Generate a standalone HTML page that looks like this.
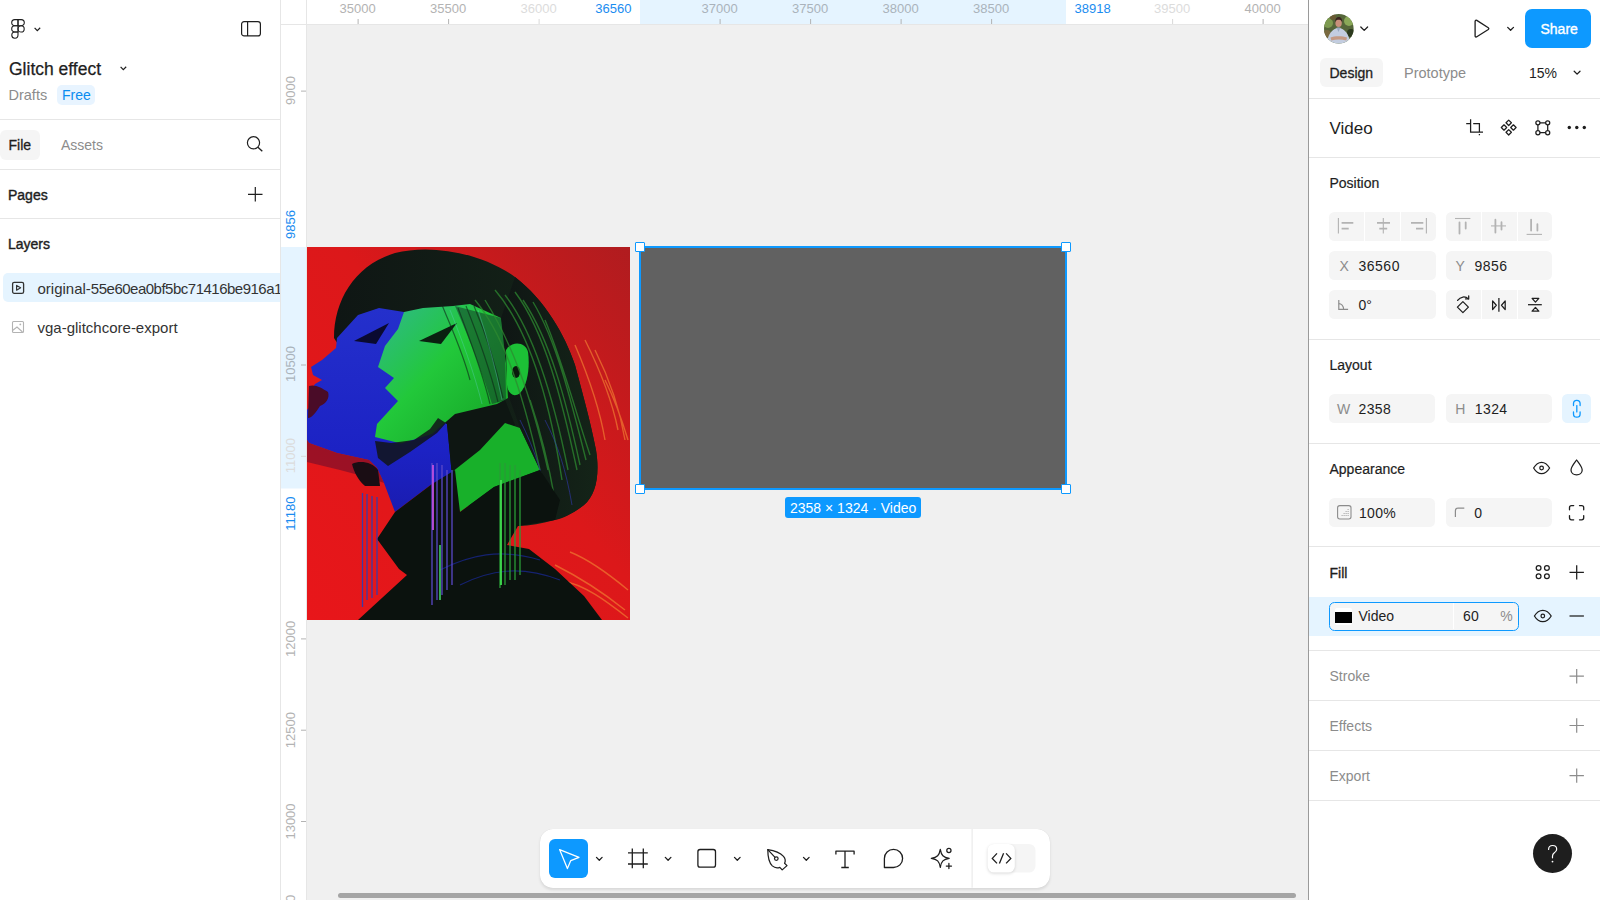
<!DOCTYPE html>
<html><head><meta charset="utf-8">
<style>
*{box-sizing:border-box;margin:0;padding:0}
html,body{width:1600px;height:900px;overflow:hidden;background:#fff;font-family:"Liberation Sans",sans-serif;color:#1e1e1e}
.a{position:absolute}
.t{position:absolute;white-space:nowrap;line-height:1}
svg{position:absolute;overflow:visible}
.sep{position:absolute;height:1px;background:#e6e6e6}
</style></head><body>

<!-- LEFT PANEL -->
<div class="a" id="left" style="left:0;top:0;width:280px;height:900px;background:#fff;overflow:hidden">
  <!-- figma logo -->
  <svg style="left:11px;top:19px" width="14" height="20" viewBox="0 0 14 20">
    <g fill="none" stroke="#1e1e1e" stroke-width="1.1">
      <path d="M7 0.6H3.8A3.1 3.1 0 0 0 3.8 6.8H7Z"/>
      <path d="M7 0.6H10.2A3.1 3.1 0 0 1 10.2 6.8H7Z"/>
      <path d="M7 6.8H3.8A3.1 3.1 0 0 0 3.8 13H7Z"/>
      <circle cx="10.1" cy="9.9" r="3.1"/>
      <path d="M7 13H3.8A3.1 3.1 0 1 0 7 16.1Z"/>
    </g>
  </svg>
  <svg style="left:34px;top:27px" width="7" height="5" viewBox="0 0 7 5"><path d="M0.6 0.8L3.3 3.6L6.2 0.8" fill="none" stroke="#1e1e1e" stroke-width="1.2"/></svg>
  <!-- sidebar toggle -->
  <svg style="left:241px;top:21px" width="20" height="16" viewBox="0 0 20 16"><rect x="0.6" y="0.6" width="18.8" height="14.3" rx="2.5" fill="none" stroke="#1e1e1e" stroke-width="1.2"/><path d="M6.6 0.6V14.9" stroke="#1e1e1e" stroke-width="1.2"/></svg>

  <div class="t" style="left:9px;top:61px;font-size:17.5px;color:#1e1e1e;-webkit-text-stroke:0.25px #1e1e1e">Glitch effect</div>
  <svg style="left:120px;top:66px" width="7" height="5" viewBox="0 0 7 5"><path d="M0.6 0.8L3.3 3.6L6.2 0.8" fill="none" stroke="#1e1e1e" stroke-width="1.2"/></svg>
  <div class="t" style="left:8.5px;top:88px;font-size:14.5px;color:#8c8c8c">Drafts</div>
  <div class="a" style="left:57px;top:85px;width:38px;height:20px;border-radius:5px;background:#e8f4ff"></div>
  <div class="t" style="left:62px;top:88px;font-size:14px;color:#0a8cf0">Free</div>

  <div class="sep" style="left:0;top:119px;width:280px"></div>
  <div class="a" style="left:0;top:130.2px;width:40.4px;height:29.4px;border-radius:6px;background:#f5f5f5"></div>
  <div class="t" style="left:8.5px;top:138px;font-size:14px;color:#1e1e1e;-webkit-text-stroke:0.3px #1e1e1e">File</div>
  <div class="t" style="left:61px;top:138px;font-size:14px;color:#8c8c8c">Assets</div>
  <svg style="left:246px;top:135px" width="18" height="18" viewBox="0 0 18 18"><circle cx="7.5" cy="7.8" r="6.1" fill="none" stroke="#1e1e1e" stroke-width="1.2"/><path d="M11.9 12.2L16.3 16.3" stroke="#1e1e1e" stroke-width="1.3"/></svg>
  <div class="sep" style="left:0;top:169px;width:280px"></div>

  <div class="t" style="left:8px;top:188px;font-size:14px;color:#1e1e1e;-webkit-text-stroke:0.4px #1e1e1e">Pages</div>
  <svg style="left:248px;top:187px" width="15" height="15" viewBox="0 0 15 15"><path d="M7.3 0V14.5M0 7.3H14.5" stroke="#1e1e1e" stroke-width="1.2"/></svg>
  <div class="sep" style="left:0;top:218px;width:280px"></div>

  <div class="t" style="left:8px;top:237px;font-size:14px;color:#1e1e1e;-webkit-text-stroke:0.4px #1e1e1e">Layers</div>

  <div class="a" style="left:3px;top:273px;width:290px;height:29px;border-radius:5px;background:#e5f4ff"></div>
  <svg style="left:11px;top:281px" width="14" height="14" viewBox="0 0 14 14"><rect x="1.6" y="1.3" width="11" height="11" rx="1.6" fill="none" stroke="#333" stroke-width="1.3"/><path d="M5.6 4.4L9.6 6.8L5.6 9.2Z" fill="none" stroke="#333" stroke-width="1.2" stroke-linejoin="round"/></svg>
  <div class="t" style="left:37.5px;top:281px;font-size:15px;color:#333">original-<span style="letter-spacing:-0.5px">55e60ea0bf5bc71416be916a1f</span></div>
  <svg style="left:11px;top:320px" width="14" height="14" viewBox="0 0 14 14"><rect x="1.5" y="1.5" width="11" height="11" rx="1" fill="none" stroke="#b3b3b3" stroke-width="1.1"/><path d="M1.5 10.5L6 7L11.5 12" fill="none" stroke="#b3b3b3" stroke-width="1.1"/><circle cx="9.3" cy="4.4" r="0.9" fill="#b3b3b3"/></svg>
  <div class="t" style="left:37.5px;top:320px;font-size:15px;color:#333">vga-glitchcore-export</div>
</div>
<div class="a" style="left:280px;top:0;width:1px;height:900px;background:#e6e6e6"></div>

<!-- RULERS -->
<div class="a" id="hruler" style="left:0;top:0;width:1308px;height:24px;overflow:hidden"><svg style="left:0;top:0" width="1308" height="24" viewBox="0 0 1308 24" font-family="Liberation Sans, sans-serif" font-size="13"><rect x="640" y="0" width="426" height="24" fill="#e5f4ff"/><rect x="357.6" y="19" width="1" height="5" fill="#b3b3b3"/><rect x="448.1" y="19" width="1" height="5" fill="#b3b3b3"/><rect x="538.6" y="19" width="1" height="5" fill="#d9d9d9"/><rect x="719.6" y="19" width="1" height="5" fill="#b3b3b3"/><rect x="810.1" y="19" width="1" height="5" fill="#b3b3b3"/><rect x="900.6" y="19" width="1" height="5" fill="#b3b3b3"/><rect x="991.1" y="19" width="1" height="5" fill="#b3b3b3"/><rect x="1172.1" y="19" width="1" height="5" fill="#d9d9d9"/><rect x="1262.6" y="19" width="1" height="5" fill="#b3b3b3"/><text x="357.6" y="13" text-anchor="middle" fill="#b3b3b3">35000</text><text x="448.1" y="13" text-anchor="middle" fill="#b3b3b3">35500</text><text x="538.6" y="13" text-anchor="middle" fill="#dcdcdc">36000</text><text x="719.6" y="13" text-anchor="middle" fill="#aab3bb">37000</text><text x="810.1" y="13" text-anchor="middle" fill="#aab3bb">37500</text><text x="900.6" y="13" text-anchor="middle" fill="#aab3bb">38000</text><text x="991.1" y="13" text-anchor="middle" fill="#aab3bb">38500</text><text x="1172.1" y="13" text-anchor="middle" fill="#dcdcdc">39500</text><text x="1262.6" y="13" text-anchor="middle" fill="#b3b3b3">40000</text><text x="631.5" y="13" text-anchor="end" fill="#1a8cf0">36560</text><text x="1074.5" y="13" text-anchor="start" fill="#1a8cf0">38918</text></svg></div>
<div class="a" style="left:281px;top:24px;width:1027px;height:1px;background:#e6e6e6"></div>
<div class="a" id="vruler" style="left:281px;top:0;width:25px;height:900px;overflow:hidden"><svg style="left:0;top:0" width="26" height="900" viewBox="0 0 26 900" font-family="Liberation Sans, sans-serif" font-size="13"><rect x="0" y="247" width="25" height="241.5" fill="#e5f4ff"/><rect x="20" y="90.6" width="5" height="1" fill="#b3b3b3"/><rect x="20" y="364.5" width="5" height="1" fill="#b3b3b3"/><rect x="20" y="455.8" width="5" height="1" fill="#d9d9d9"/><rect x="20" y="638.4" width="5" height="1" fill="#b3b3b3"/><rect x="20" y="729.7" width="5" height="1" fill="#b3b3b3"/><rect x="20" y="821.0" width="5" height="1" fill="#b3b3b3"/><text transform="translate(14.3 90.6) rotate(-90)" text-anchor="middle" fill="#b3b3b3">9000</text><text transform="translate(14.3 364) rotate(-90)" text-anchor="middle" fill="#aab3bb">10500</text><text transform="translate(14.3 455.7) rotate(-90)" text-anchor="middle" fill="#dcdcdc">11000</text><text transform="translate(14.3 638.9) rotate(-90)" text-anchor="middle" fill="#b3b3b3">12000</text><text transform="translate(14.3 730.2) rotate(-90)" text-anchor="middle" fill="#b3b3b3">12500</text><text transform="translate(14.3 821.5) rotate(-90)" text-anchor="middle" fill="#b3b3b3">13000</text><text transform="translate(14.3 912.8) rotate(-90)" text-anchor="middle" fill="#b3b3b3">13500</text><text transform="translate(14.3 239) rotate(-90)" text-anchor="start" fill="#1a8cf0">9856</text><text transform="translate(14.3 496.5) rotate(-90)" text-anchor="end" fill="#1a8cf0">11180</text></svg></div>
<div class="a" style="left:306px;top:0;width:1px;height:900px;background:#e6e6e6"></div>

<!-- CANVAS -->
<div class="a" id="canvas" style="left:307px;top:25px;width:1001px;height:875px;background:#f0f0f0;overflow:hidden">
  <!-- photo -->
  <svg style="left:0;top:222px" width="323" height="373" viewBox="307 247 323 373" preserveAspectRatio="none">
    <defs>
      <linearGradient id="bg" x1="0" y1="1" x2="1" y2="0">
        <stop offset="0" stop-color="#e8161a"/><stop offset="0.55" stop-color="#dc181a"/><stop offset="1" stop-color="#b01c1f"/>
      </linearGradient>
      <linearGradient id="gf" x1="0" y1="0" x2="1" y2="1">
        <stop offset="0" stop-color="#30b890"/><stop offset="0.45" stop-color="#22c83a"/><stop offset="1" stop-color="#14a024"/>
      </linearGradient>
      <linearGradient id="bf" x1="0" y1="0" x2="0" y2="1">
        <stop offset="0" stop-color="#2430cc"/><stop offset="0.7" stop-color="#1c22c4"/><stop offset="1" stop-color="#1a1cb0"/>
      </linearGradient>
      <linearGradient id="hg" x1="0" y1="0" x2="1" y2="0">
        <stop offset="0" stop-color="#0f1614"/><stop offset="1" stop-color="#142418"/>
      </linearGradient>
    </defs>
    <rect x="307" y="247" width="323" height="373" fill="url(#bg)"/>
    <g opacity="0.7" stroke="#f07a30" stroke-width="1.4" fill="none">
      <path d="M575 345C590 380 600 410 605 440M585 340C600 370 612 400 618 430M595 350C610 380 620 410 625 440M605 380C615 400 622 420 628 440"/>
      <path d="M555 565C575 575 600 590 625 610M560 580C585 585 605 600 628 618M570 552C590 560 610 575 628 590"/>
    </g>
    <!-- hair bob -->
    <path d="M334 338C334 300 355 265 395 253C430 244 480 252 515 277C545 300 565 335 575 365C583 395 590 420 596 450C600 475 596 495 584 505C570 517 545 525 518 526L480 520L440 470L400 440Z" fill="url(#hg)"/>
    <!-- blue face + neck -->
    <path d="M337 338L358 315L379 308L404 312L420 330L438 400L440 418L447 424L452 476L432 484L395 512L384 483L377 468L369 460L337 453L309 443L307 440L307 410L314 402L309 393L315 384L322 380L313 375L311 367L322 360L336 348Z" fill="url(#bf)"/>
    <path d="M307 440L309 443L337 453L369 460L377 468L384 483L370 478L340 470L307 462Z" fill="#8a1028" opacity="0.8"/>
    <path d="M352 464C360 460 372 462 378 470L380 486L365 486C358 480 354 472 352 464Z" fill="#1a0d14"/>
    <path d="M309 386C315 384 322 388 328 392C330 398 326 404 320 406C316 412 312 418 308 418Z" fill="#4a0c28"/>
    <path d="M354 341L389 323L376 344Z" fill="#0a0a30"/>
    <!-- dark between necks -->
    <path d="M437 418L505 400L515 425L480 451L452 476L447 424Z" fill="#0e1612"/>
    <!-- green face -->
    <path d="M404 312L423 308L453 306L470 304L501 318L505 345L508 398L497 404L455 414L432 434L401 443.5L375 437L377 424L398 401L385 388L394 378L378 367L385 346L398 329Z" fill="url(#gf)"/>
    <path d="M375 441L391 443L414 440L430 429L438 418L446 423L437 433L410 452L388 466L378 458Z" fill="#101418" opacity="0.85"/>
    <path d="M419 341L457 323L441 344Z" fill="#0a2010"/>
    <path d="M455 306L501 318L505 345L506 400L492 404C485 380 470 340 455 306Z" fill="#14382a" opacity="0.55"/>
    <g stroke="#0e2418" stroke-width="1.2" opacity="0.6" fill="none"><path d="M458 308C470 340 482 370 490 404M466 306C478 336 490 370 498 402M474 306C486 334 496 366 503 398M440 300C452 330 462 350 470 380"/></g>
    <g stroke="#60d0c8" stroke-width="1" opacity="0.35" fill="none"><path d="M450 310C462 340 474 372 482 404M478 310C488 340 496 370 502 400"/></g>
    <!-- green neck -->
    <path d="M447 476L480 450L505 423L520 428L540 470L494 487L460 512Z" fill="#18b02a"/>
    <!-- back hair over -->
    <path d="M501 318L515 277C545 300 565 335 575 365C583 395 590 420 596 450C600 475 596 495 584 505C575 512 565 518 555 520L540 470L520 428L510 400Z" fill="url(#hg)"/>
    <path d="M506 350C512 340 526 342 528 352C530 365 528 385 520 393C514 398 508 394 507 385Z" fill="#1cc036"/>
    <ellipse cx="516" cy="372" rx="4" ry="6" fill="#0a1a0c"/>
    <g stroke="#2e8a30" stroke-width="1.4" opacity="0.75" fill="none">
      <path d="M475 300C500 330 520 380 540 470M495 290C525 325 548 390 562 480M515 292C545 332 562 400 577 470M533 302C556 340 571 400 586 460M530 400C540 430 548 460 555 500M485 300C510 340 530 390 548 470M505 295C532 330 552 390 568 470M523 300C550 340 566 400 580 465M545 320C562 360 575 410 590 455"/>
    </g>
    <g stroke="#3038b0" stroke-width="1" opacity="0.6" fill="none">
      <path d="M520 420C535 450 545 480 550 515M545 420C558 445 566 470 572 505"/>
    </g>
    <!-- jacket -->
    <path d="M358 620L407 575L399 569L377 539L395 512L432 484L455 470L460 512L494 487L540 470L560 500L555 520L518 526L507 545L529 549L555 569L584 596L602 620Z" fill="#0b120e"/>
    <g stroke="#1a2a9a" stroke-width="1.2" opacity="0.7" fill="none">
      <path d="M440 570C470 555 500 548 540 560M460 585C490 570 520 565 560 580"/>
    </g>
    <!-- earrings -->
    <g fill="none" stroke-width="1.3">
      <path d="M362.5 493V607M367 494V600M372 496V598M377 497V595" stroke="#3a3aa8"/>
      <path d="M432 463V605M437 463V600M442 465V595M447 470V590M452 470V585" stroke="#5a48c8"/>
      <path d="M433 465V530" stroke="#c050e0" stroke-width="1.8"/>
      <path d="M440 545V600" stroke="#40d060" stroke-width="1.6"/>
      <path d="M500 463V588M505 463V585M510 465V580M515 465V580M520 470V575" stroke="#2a9a38"/>
      <path d="M501 480V585" stroke="#40e050" stroke-width="1.8"/>
    </g>
  </svg>

  <!-- video rect -->
  <div class="a" style="left:333px;top:222px;width:426px;height:242px;background:#616161"></div>
  <div class="a" style="left:331.7px;top:221px;width:428.6px;height:244px;border:2px solid #0d99ff"></div>
  <div class="a" style="left:328px;top:217px;width:10px;height:10px;background:#fff;border:1.6px solid #0d99ff;border-radius:1px"></div>
  <div class="a" style="left:754px;top:217px;width:10px;height:10px;background:#fff;border:1.6px solid #0d99ff;border-radius:1px"></div>
  <div class="a" style="left:328px;top:459px;width:10px;height:10px;background:#fff;border:1.6px solid #0d99ff;border-radius:1px"></div>
  <div class="a" style="left:754px;top:459px;width:10px;height:10px;background:#fff;border:1.6px solid #0d99ff;border-radius:1px"></div>
  <div class="a" style="left:478px;top:472px;width:136px;height:21px;background:#0d99ff;border-radius:3px"></div>
  <div class="t" style="left:483px;top:476px;font-size:14px;color:#fff">2358 × 1324 · Video</div>


  <!-- scrollbar -->
  <div class="a" style="left:31px;top:867.5px;width:958px;height:5px;border-radius:3px;background:#a5a5a5"></div>
</div>

<!-- TOOLBAR -->
<div class="a" style="left:539.5px;top:829px;width:510.5px;height:58.7px;background:#fff;border-radius:13px;box-shadow:0 0 0.5px rgba(0,0,0,0.18),0 2px 3px rgba(0,0,0,0.10)"></div>
<div class="a" style="left:549px;top:838.8px;width:39px;height:39px;background:#0d99ff;border-radius:6px"></div>
<svg style="left:0;top:0" width="1600" height="900" viewBox="0 0 1600 900">
  <g fill="none" stroke-linecap="round" stroke-linejoin="round">
    <path d="M559.6 849.6L579 857.3L570.8 860.6L567.4 868.6Z" stroke="#fff" stroke-width="1.25"/>
    <g stroke="#1e1e1e" stroke-width="1.3">
      <path d="M596.5 857.4L599.3 860.2L602.1 857.4"/>
      <path d="M665.3 857.4L668.1 860.2L670.9 857.4"/>
      <path d="M734.5 857.4L737.3 860.2L740.1 857.4"/>
      <path d="M803.5 857.4L806.3 860.2L809.1 857.4"/>
    </g>
    <g stroke="#1e1e1e" stroke-width="1.3" stroke-linecap="butt">
      <path d="M632.3 848.6V868.2M643.3 848.6V868.2M628 852.9H647.8M628 864H647.8"/>
    </g>
    <rect x="697.9" y="849.5" width="17.6" height="17.6" rx="2.2" stroke="#1e1e1e" stroke-width="1.3"/>
    <g stroke="#1e1e1e" stroke-width="1.25">
      <path d="M767.8 849.6C774 850.5 780 852.5 783.5 856.3C785.4 858.5 785.5 861.3 784.6 863.3L787 865.6L782.2 869.9L779.8 867.3C777.6 868.2 774.6 867.9 772.3 865.9C768.8 862.6 767.8 855.5 767.8 849.6Z"/>
      <path d="M767.8 849.6L774.8 857.2"/>
      <circle cx="776.3" cy="858.6" r="1.8"/>
    </g>
    <g stroke="#1e1e1e" stroke-width="1.3" stroke-linecap="butt">
      <path d="M835.9 854.4V851.2H854.1V854.4M845 851.2V867.5M841.3 867.5H848.8"/>
    </g>
    <path d="M884.4 867.5V858.4A9.1 9.1 0 1 1 893.5 867.5Z" stroke="#1e1e1e" stroke-width="1.3"/>
    <g stroke="#1e1e1e" stroke-width="1.25">
      <path d="M940.3 849.4C941.3 855.4 943.3 857.4 949.2 858.3C943.3 859.2 941.3 861.2 940.3 867.3C939.3 861.2 937.3 859.2 931.3 858.3C937.3 857.4 939.3 855.4 940.3 849.4Z"/>
      <circle cx="948.9" cy="850.4" r="2.1"/>
      <path d="M948.9 863.4V868.6M946.3 866H951.5"/>
    </g>
  </g>
  <rect x="971.6" y="829" width="1" height="58.7" fill="#e6e6e6"/>
  <rect x="987.6" y="843.9" width="47.9" height="28.7" rx="6.5" fill="#f5f5f5"/>
  <rect x="987.6" y="843.9" width="27.2" height="28.7" rx="6.5" fill="#fff" style="filter:drop-shadow(0 1px 1.5px rgba(0,0,0,0.15))"/>
  <g fill="none" stroke="#1e1e1e" stroke-width="1.3" stroke-linecap="butt">
    <path d="M997 853.4L992.3 858.4L997 863.4M1006.1 853.4L1010.8 858.4L1006.1 863.4M1003.6 853.2L999.4 863.6"/>
  </g>
</svg>

<!-- RIGHT PANEL -->
<div class="a" style="left:1308px;top:0;width:1px;height:900px;background:#9a9a9a"></div>
<div class="a" id="right" style="left:1309px;top:0;width:291px;height:900px;background:#fff"></div>
<!-- avatar -->
<svg style="left:1324px;top:14px" width="30" height="30" viewBox="0 0 30 30">
  <defs><clipPath id="av"><circle cx="14.8" cy="14.8" r="14.8"/></clipPath></defs>
  <g clip-path="url(#av)">
    <rect width="30" height="30" fill="#55663a"/>
    <circle cx="4" cy="9" r="5" fill="#7d9a50"/><circle cx="25" cy="7" r="5" fill="#8aa858"/><circle cx="27" cy="19" r="4" fill="#2c3a1e"/><circle cx="3" cy="20" r="4" fill="#7a6a40"/><circle cx="9" cy="3" r="3" fill="#6a5a34"/>
    <path d="M2.5 31C3.5 21 8 14.5 14.5 13.8C21 14.5 25.5 21 26.5 31Z" fill="#c3cde0"/>
    <path d="M12.6 13.5L14.5 18L16.4 13.5Z" fill="#98a8c0"/>
    <ellipse cx="14.6" cy="9" rx="3.2" ry="4" fill="#c8907c"/>
    <path d="M11.2 8.5C11 4.5 12.8 3 14.7 3C16.8 3 18.4 4.5 18.2 8.5C17.4 6.3 16.2 5.8 14.6 5.8C13 5.8 11.9 6.3 11.2 8.5Z" fill="#3a2420"/>
    <path d="M6.5 23.5C10.5 21.8 18.5 21.8 23 23.5L22.3 26.5C18 25.3 12 25.3 7.3 26.5Z" fill="#c49a84"/>
  </g>
</svg>
<svg style="left:0;top:0" width="1600" height="900" viewBox="0 0 1600 900">
  <g fill="none" stroke="#1e1e1e" stroke-width="1.3" stroke-linecap="round" stroke-linejoin="round">
    <path d="M1360.8 27L1364.2 30.4L1367.6 27"/>
    <path d="M1475.1 21.3C1475.1 20.4 1476 19.9 1476.8 20.4L1488.3 27.7C1489 28.2 1489 29 1488.3 29.5L1476.8 36.8C1476 37.3 1475.1 36.8 1475.1 35.9Z"/>
    <path d="M1507.7 27.4L1510.6 30.3L1513.5 27.4"/>
    <path d="M1574.2 71.2L1577.1 74.1L1580 71.2"/>
  </g>
</svg>
<div class="a" style="left:1525.2px;top:8.9px;width:65.8px;height:39.4px;background:#0d99ff;border-radius:7px"></div>
<div class="t" style="left:1540.5px;top:22px;font-size:14px;color:#fff;-webkit-text-stroke:0.35px #fff">Share</div>

<div class="a" style="left:1320px;top:58.2px;width:63.4px;height:29px;background:#f5f5f5;border-radius:6px"></div>
<div class="t" style="left:1329.5px;top:66px;font-size:14px;color:#1e1e1e;-webkit-text-stroke:0.3px #1e1e1e">Design</div>
<div class="t" style="left:1404px;top:66px;font-size:14.5px;color:#8c8c8c">Prototype</div>
<div class="t" style="left:1529px;top:66px;font-size:14px;color:#1e1e1e">15%</div>
<div class="sep" style="left:1309px;top:98px;width:291px"></div>

<div class="t" style="left:1329.5px;top:120px;font-size:17px;color:#1e1e1e">Video</div>
<div class="sep" style="left:1309px;top:157px;width:291px"></div>


<!-- header icons -->
<svg style="left:0;top:0" width="1600" height="900" viewBox="0 0 1600 900">
  <g fill="none" stroke="#1e1e1e" stroke-width="1.25">
    <path d="M1470.6 119.2V132.2H1483M1466.2 123.5H1470.6M1473.2 123.5H1479.4V131.5M1479.4 134V135.3" />
    <path d="M1508.7 120.1L1511.4 122.8L1508.7 125.5L1506 122.8Z M1504 124.8L1506.7 127.5L1504 130.2L1501.3 127.5Z M1513.4 124.8L1516.1 127.5L1513.4 130.2L1510.7 127.5Z M1508.7 129.6L1511.4 132.3L1508.7 135L1506 132.3Z" stroke-linejoin="round"/>
    <path d="M1537.9 124.9V130.6M1547.7 124.9V130.6M1540 122.8H1545.6M1540 132.7H1545.6"/>
    <circle cx="1537.9" cy="122.8" r="2.05"/><circle cx="1547.7" cy="122.8" r="2.05"/><circle cx="1537.9" cy="132.7" r="2.05"/><circle cx="1547.7" cy="132.7" r="2.05"/>
  </g>
  <g fill="#1e1e1e"><circle cx="1569.3" cy="127.5" r="1.7"/><circle cx="1576.8" cy="127.5" r="1.7"/><circle cx="1584.3" cy="127.5" r="1.7"/></g>
</svg>

<!-- POSITION -->
<div class="t" style="left:1329.5px;top:176px;font-size:14px;color:#1e1e1e;-webkit-text-stroke:0.2px #1e1e1e">Position</div>
<div class="a" style="left:1329.3px;top:211.8px;width:106.3px;height:29.3px;background:#f5f5f5;border-radius:5.5px"></div>
<div class="a" style="left:1364px;top:211.8px;width:1px;height:29.3px;background:#fff"></div>
<div class="a" style="left:1400px;top:211.8px;width:1px;height:29.3px;background:#fff"></div>
<div class="a" style="left:1446px;top:211.8px;width:106.4px;height:29.3px;background:#f5f5f5;border-radius:5.5px"></div>
<div class="a" style="left:1480.5px;top:211.8px;width:1px;height:29.3px;background:#fff"></div>
<div class="a" style="left:1516.5px;top:211.8px;width:1px;height:29.3px;background:#fff"></div>
<svg style="left:0;top:0" width="1600" height="900" viewBox="0 0 1600 900">
  <g stroke="#b3b3b3" fill="none">
    <path d="M1338.4 218V233.6" stroke-width="1.1"/>
    <path d="M1341.6 222.9H1353.3M1341.6 228.7H1348.7" stroke-width="1.8"/>
    <path d="M1383.3 218V233.6" stroke-width="1.1"/>
    <path d="M1377 222.9H1390M1379.3 228.7H1387.2" stroke-width="1.8"/>
    <path d="M1426.4 218V233.6" stroke-width="1.1"/>
    <path d="M1411 222.9H1423.3M1416 228.7H1423.3" stroke-width="1.8"/>
    <path d="M1455 218.5H1470.4" stroke-width="1.1"/>
    <path d="M1459.5 222.3V233.5M1465.7 222.3V228.5" stroke-width="1.8" stroke-linecap="round"/>
    <path d="M1491 225.9H1506" stroke-width="1.1"/>
    <path d="M1495.4 219.7V232.5M1501.5 222.2V229.5" stroke-width="1.8" stroke-linecap="round"/>
    <path d="M1526.6 234.4H1542" stroke-width="1.1"/>
    <path d="M1531.1 219.7V230.5M1537.4 224.2V230.5" stroke-width="1.8" stroke-linecap="round"/>
  </g>
</svg>

<div class="a" style="left:1329.4px;top:251.2px;width:106.3px;height:28.9px;background:#f5f5f5;border-radius:5.5px"></div>
<div class="a" style="left:1446.2px;top:251.2px;width:106px;height:28.9px;background:#f5f5f5;border-radius:5.5px"></div>
<div class="t" style="left:1339.5px;top:259px;font-size:14px;color:#8c8c8c">X</div>
<div class="t" style="left:1358.5px;top:259px;font-size:14px;letter-spacing:0.5px;color:#1e1e1e">36560</div>
<div class="t" style="left:1455.5px;top:259px;font-size:14px;color:#8c8c8c">Y</div>
<div class="t" style="left:1474.5px;top:259px;font-size:14px;letter-spacing:0.5px;color:#1e1e1e">9856</div>

<div class="a" style="left:1329.4px;top:290.3px;width:106.3px;height:28.9px;background:#f5f5f5;border-radius:5.5px"></div>
<div class="a" style="left:1446.2px;top:290.3px;width:106px;height:28.9px;background:#f5f5f5;border-radius:5.5px"></div>
<div class="a" style="left:1481px;top:290.3px;width:1px;height:28.9px;background:#fff"></div>
<div class="a" style="left:1517px;top:290.3px;width:1px;height:28.9px;background:#fff"></div>
<div class="t" style="left:1358.5px;top:298px;font-size:14px;color:#1e1e1e">0°</div>
<svg style="left:0;top:0" width="1600" height="900" viewBox="0 0 1600 900">
  <g fill="none" stroke="#8c8c8c" stroke-width="1.2">
    <path d="M1338.8 300.1V309.3H1348.1"/>
    <path d="M1338.8 303.6C1341.3 303.6 1343.6 306 1343.6 309.3" stroke-width="1.1"/>
  </g>
  <g fill="none" stroke="#1e1e1e" stroke-width="1.25" stroke-linejoin="round">
    <path d="M1462.9 301.6L1468.4 307.1L1462.9 312.6L1457.4 307.1Z"/>
    <path d="M1457.6 300.4C1460.5 296.5 1465.3 295.9 1468.4 298.9" stroke-linecap="round"/>
    <path d="M1465.5 298.9H1468.7V295.8" stroke-linecap="round"/>
    <path d="M1498.9 297.9V311.8"/>
    <path d="M1492.6 300.9V309.6L1496.3 305.25Z M1505.2 300.9V309.6L1501.5 305.25Z"/>
    <path d="M1528 304.7H1541.8"/>
    <path d="M1532.1 298.4H1538.8L1535.45 302.1Z M1532.1 311.2H1538.8L1535.45 307.4Z"/>
  </g>
</svg>
<div class="sep" style="left:1309px;top:339px;width:291px"></div>

<!-- LAYOUT -->
<div class="t" style="left:1329.5px;top:358px;font-size:14px;color:#1e1e1e;-webkit-text-stroke:0.2px #1e1e1e">Layout</div>
<div class="a" style="left:1329.1px;top:394.4px;width:106.4px;height:28.7px;background:#f5f5f5;border-radius:5.5px"></div>
<div class="a" style="left:1445.7px;top:394.4px;width:106.7px;height:28.7px;background:#f5f5f5;border-radius:5.5px"></div>
<div class="a" style="left:1562.4px;top:394.4px;width:28.5px;height:28.7px;background:#e5f4ff;border-radius:5.5px"></div>
<div class="t" style="left:1337px;top:402px;font-size:14px;color:#8c8c8c">W</div>
<div class="t" style="left:1358.5px;top:402px;font-size:14px;letter-spacing:0.4px;color:#1e1e1e">2358</div>
<div class="t" style="left:1455.3px;top:402px;font-size:14px;color:#8c8c8c">H</div>
<div class="t" style="left:1474.8px;top:402px;font-size:14px;letter-spacing:0.4px;color:#1e1e1e">1324</div>
<svg style="left:0;top:0" width="1600" height="900" viewBox="0 0 1600 900">
  <g fill="none" stroke="#0d99ff" stroke-width="1.3" stroke-linecap="round">
    <path d="M1573.5 405.5V403.6C1573.5 401.5 1574.9 400.4 1576.8 400.4C1578.7 400.4 1580.1 401.5 1580.1 403.6V405.5"/>
    <path d="M1573.5 412V413.9C1573.5 416 1574.9 417.1 1576.8 417.1C1578.7 417.1 1580.1 416 1580.1 413.9V412"/>
    <path d="M1576.8 405.6V411.9"/>
  </g>
</svg>
<div class="sep" style="left:1309px;top:443px;width:291px"></div>

<!-- APPEARANCE -->
<div class="t" style="left:1329.5px;top:462px;font-size:14px;color:#1e1e1e;-webkit-text-stroke:0.2px #1e1e1e">Appearance</div>
<div class="a" style="left:1329.1px;top:498.1px;width:106.4px;height:28.5px;background:#f5f5f5;border-radius:5.5px"></div>
<div class="a" style="left:1445.7px;top:498.1px;width:106.7px;height:28.5px;background:#f5f5f5;border-radius:5.5px"></div>
<div class="t" style="left:1359px;top:506px;font-size:14px;letter-spacing:0.3px;color:#1e1e1e">100%</div>
<div class="t" style="left:1474.3px;top:506px;font-size:14px;color:#1e1e1e">0</div>
<svg style="left:0;top:0" width="1600" height="900" viewBox="0 0 1600 900">
  <g fill="none" stroke="#1e1e1e" stroke-width="1.25">
    <path d="M1533.6 468C1536 464 1538.6 462.3 1541.6 462.3C1544.6 462.3 1547.2 464 1549.6 468C1547.2 472 1544.6 473.7 1541.6 473.7C1538.6 473.7 1536 472 1533.6 468Z" stroke-linejoin="round"/>
    <circle cx="1541.6" cy="468" r="1.8"/>
    <path d="M1576.6 460C1574 463.5 1571 467 1571 470C1571 473 1573.5 474.8 1576.6 474.8C1579.7 474.8 1582.2 473 1582.2 470C1582.2 467 1579.2 463.5 1576.6 460Z" stroke-linejoin="round"/>
    <path d="M1569.5 509.8V507.6C1569.5 506.4 1570.3 505.6 1571.5 505.6H1573.7M1579.5 505.6H1581.7C1582.9 505.6 1583.7 506.4 1583.7 507.6V509.8M1583.7 515.6V517.8C1583.7 519 1582.9 519.8 1581.7 519.8H1579.5M1573.7 519.8H1571.5C1570.3 519.8 1569.5 519 1569.5 517.8V515.6" stroke-width="1.3" stroke-linecap="round"/>
  </g>
  <g fill="none" stroke="#8c8c8c" stroke-width="1.1">
    <rect x="1337.6" y="505.6" width="13.4" height="13.4" rx="2.2"/>
    <path d="M1455.4 517V510.7C1455.4 509.2 1456.4 508.2 1457.9 508.2H1464.3" stroke-width="1.2"/>
  </g>
  <g fill="#a0a0a0">
    <rect x="1347.6" y="509" width="1" height="1"/><rect x="1345.6" y="511" width="1" height="1"/><rect x="1347.6" y="511" width="1" height="1"/>
    <rect x="1343.6" y="513" width="1" height="1"/><rect x="1345.6" y="513" width="1" height="1"/><rect x="1347.6" y="513" width="1" height="1"/>
    <rect x="1341.6" y="515" width="1" height="1"/><rect x="1343.6" y="515" width="1" height="1"/><rect x="1345.6" y="515" width="1" height="1"/><rect x="1347.6" y="515" width="1" height="1"/>
  </g>
</svg>
<div class="sep" style="left:1309px;top:546px;width:291px"></div>

<!-- FILL -->
<div class="t" style="left:1329.5px;top:566px;font-size:14px;color:#1e1e1e;-webkit-text-stroke:0.35px #1e1e1e">Fill</div>
<div class="a" style="left:1309px;top:597px;width:291px;height:39px;background:#e5f4ff"></div>
<div class="a" style="left:1329.4px;top:601.5px;width:189.3px;height:29px;background:#f5f5f5;border:1.3px solid #0d99ff;border-radius:5.5px"></div>
<div class="a" style="left:1453px;top:602.8px;width:1px;height:26.4px;background:#fff"></div>
<div class="a" style="left:1335px;top:608px;width:17px;height:17px;background:#fff;border-radius:2px"></div>
<div class="a" style="left:1335px;top:612px;width:17px;height:11px;background:#000"></div>
<div class="t" style="left:1358.5px;top:609px;font-size:14px;color:#1e1e1e">Video</div>
<div class="t" style="left:1463px;top:609px;font-size:14px;letter-spacing:0.3px;color:#1e1e1e">60</div>
<div class="t" style="left:1500.3px;top:609px;font-size:14px;color:#8c8c8c">%</div>
<svg style="left:0;top:0" width="1600" height="900" viewBox="0 0 1600 900">
  <g fill="none" stroke="#1e1e1e" stroke-width="1.25">
    <circle cx="1538.6" cy="568.1" r="2.4"/><circle cx="1546.9" cy="568.1" r="2.4"/><circle cx="1538.6" cy="576.3" r="2.4"/><circle cx="1546.9" cy="576.3" r="2.4"/>
    <path d="M1576.7 565.2V579.6M1569.5 572.4H1583.9"/>
    <path d="M1534.4 616C1536.8 612 1539.6 610.3 1542.8 610.3C1546 610.3 1548.8 612 1551.2 616C1548.8 620 1546 621.7 1542.8 621.7C1539.6 621.7 1536.8 620 1534.4 616Z" stroke-linejoin="round"/>
    <circle cx="1542.8" cy="616" r="1.8"/>
    <path d="M1569.5 616H1583.9"/>
  </g>
  <g fill="none" stroke="#8c8c8c" stroke-width="1.2">
    <path d="M1576.7 669V683.4M1569.5 676.2H1583.9"/>
    <path d="M1576.7 718.3V732.7M1569.5 725.5H1583.9"/>
    <path d="M1576.7 768.4V782.8M1569.5 775.6H1583.9"/>
  </g>
</svg>
<div class="sep" style="left:1309px;top:650px;width:291px"></div>
<div class="t" style="left:1329.5px;top:669px;font-size:14px;color:#8c8c8c">Stroke</div>
<div class="sep" style="left:1309px;top:700px;width:291px"></div>
<div class="t" style="left:1329.5px;top:719px;font-size:14px;color:#8c8c8c">Effects</div>
<div class="sep" style="left:1309px;top:750px;width:291px"></div>
<div class="t" style="left:1329.5px;top:769px;font-size:14px;color:#8c8c8c">Export</div>
<div class="sep" style="left:1309px;top:800px;width:291px"></div>

<div class="a" style="left:1532.8px;top:834px;width:39px;height:39px;border-radius:50%;background:#1e1e1e"></div>
<svg style="left:0;top:0" width="1600" height="900" viewBox="0 0 1600 900">
  <path d="M1548.6 849.4C1548.6 846.9 1550.3 845.5 1552.6 845.5C1555 845.5 1556.7 847 1556.7 849.3C1556.7 851.2 1555.5 852.1 1554.1 853.1C1553 853.9 1552.5 854.6 1552.5 856.3V857.8" fill="none" stroke="#fff" stroke-width="1.2" stroke-linecap="round"/>
  <circle cx="1552.5" cy="861.6" r="0.9" fill="#fff"/>
</svg>

</body></html>
